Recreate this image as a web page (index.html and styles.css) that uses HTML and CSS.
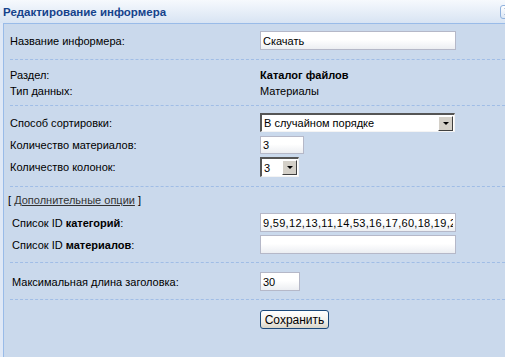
FILE: index.html
```html
<!DOCTYPE html>
<html lang="ru">
<head>
    <meta charset="UTF-8">
    <title>Редактирование информера</title>
    <link rel="stylesheet" href="styles.css">
</head>
<body>

    <div class="window">
        <!-- Window title bar -->
        <div class="window-header">
            <span class="window-title">Редактирование информера</span>
            <span class="tool-close">
                <svg width="9" height="9" viewBox="0 0 9 9"><path d="M2 1 L6 4.5 L2 8" fill="none" stroke="#15428b" stroke-width="1.6"/></svg>
            </span>
        </div>

        <div class="window-body">
            <form class="informer-form">
                <div class="form-section sec-name">
                    <div class="form-row">
                        <label class="row-label" for="infName">Название информера:</label>
                        <input type="text" id="infName" class="text-field field-wide" value="Скачать">
                    </div>
                </div>

                <div class="form-section sec-info">
                    <div class="form-row text-row">
                        <span class="row-label">Раздел:</span>
                        <b>Каталог файлов</b>
                    </div>
                    <div class="form-row text-row">
                        <span class="row-label">Тип данных:</span>
                        <span>Материалы</span>
                    </div>
                </div>

                <div class="form-section sec-sort">
                    <div class="form-row">
                        <span class="row-label">Способ сортировки:</span>
                        <div class="combo combo-wide">
                            <span class="combo-value">В случайном порядке</span>
                            <span class="combo-btn"><span class="combo-arrow"></span></span>
                        </div>
                    </div>
                    <div class="form-row">
                        <label class="row-label" for="matCount">Количество материалов:</label>
                        <input type="text" id="matCount" class="text-field field-count" value="3">
                    </div>
                    <div class="form-row">
                        <span class="row-label">Количество колонок:</span>
                        <div class="combo combo-small">
                            <span class="combo-value">3</span>
                            <span class="combo-btn"><span class="combo-arrow"></span></span>
                        </div>
                    </div>
                </div>

                <div class="form-section sec-extra">
                    <div class="extra-toggle">[ <a href="#">Дополнительные опции</a> ]</div>
                    <div class="form-row">
                        <label class="row-label" for="catIds">Список ID <b>категорий</b>:</label>
                        <input type="text" id="catIds" class="text-field field-wide field-ids" value="9,59,12,13,11,14,53,16,17,60,18,19,20,21">
                    </div>
                    <div class="form-row">
                        <label class="row-label" for="matIds">Список ID <b>материалов</b>:</label>
                        <input type="text" id="matIds" class="text-field field-wide" value="">
                    </div>
                </div>

                <div class="form-section sec-title">
                    <div class="form-row">
                        <label class="row-label" for="titleLen">Максимальная длина заголовка:</label>
                        <input type="text" id="titleLen" class="text-field field-len" value="30">
                    </div>
                </div>

                <div class="form-actions">
                    <button type="button" class="save-btn">Сохранить</button>
                </div>
            </form>
        </div>
    </div>

</body>
</html>
```

FILE: styles.css
```css
/* Basic Reset */
* {
    margin: 0;
    padding: 0;
    box-sizing: border-box;
}

body {
    font-family: "Liberation Sans", Arial, sans-serif;
    font-size: 11px;
    color: #000;
    background-color: #dfe8f6;
    overflow: hidden;
}

.window {
    width: 505px;
    height: 357px;
    overflow: hidden;
}

/* Title bar */
.window-header {
    height: 23px;
    display: flex;
    align-items: center;
    padding-left: 3px;
    background: linear-gradient(#f6f9fd, #d8e4f3);
}

.window-title {
    font-size: 11.5px;
    font-weight: bold;
    color: #15428b;
}

.tool-close {
    margin-left: auto;
    margin-right: -10px;
    width: 15px;
    height: 14px;
    display: flex;
    align-items: center;
    justify-content: center;
    border: 1px solid #8fb1dd;
    border-radius: 3px;
    background: linear-gradient(#ffffff, #dbe6f4);
}

/* Panel body */
.window-body {
    margin-left: 3px;
    height: 334px;
    border-left: 1px solid #99bbe8;
    border-top: 1px solid #99bbe8;
    background-color: #cad9ec;
}

.form-section {
    margin-left: 6px;
    border-bottom: 1px dashed #a0bde6;
}

.form-row {
    display: flex;
    align-items: center;
}

.row-label {
    width: 250px;
    flex-shrink: 0;
}

.text-row {
    line-height: 16px;
}

.sec-name {
    padding: 7px 0 9px;
}

.sec-info {
    padding: 7px 0 6px;
}

.sec-sort {
    padding: 7px 0 9px;
}

.sec-sort .form-row + .form-row {
    margin-top: 4px;
}

.sec-sort .form-row:last-child {
    margin-top: 3px;
}

.sec-extra {
    padding: 5px 0 8px;
}

.sec-extra .row-label {
    padding-left: 2px;
}

.sec-extra .form-row + .form-row {
    margin-top: 3px;
}

.extra-toggle {
    line-height: 16px;
    margin: 0 0 5px -2px;
}

.extra-toggle a {
    color: #333;
}

.sec-title {
    padding: 9px 0 8px;
}

.sec-title .row-label {
    padding-left: 2px;
}

/* Text inputs */
.text-field {
    height: 19px;
    padding: 0 2px;
    font-family: inherit;
    font-size: 11px;
    color: #000;
    border: 1px solid #b5b8c8;
    background: linear-gradient(#ffffff 45%, #eceef2);
    outline: none;
}

.field-wide {
    width: 196px;
}

.field-ids {
    letter-spacing: 0.3px;
}

.field-count {
    width: 44px;
    height: 18px;
}

.field-len {
    width: 40px;
}

/* Combo boxes drawn in the classic style */
.combo {
    display: flex;
    align-items: center;
    height: 19px;
    border-style: solid;
    border-width: 2px 1px 1px 2px;
    border-color: #555 #f4f4f4 #f4f4f4 #555;
    background-color: #fff;
    padding-right: 1px;
}

.combo-wide {
    width: 195px;
}

.combo-small {
    width: 39px;
    height: 20px;
}

.combo-value {
    flex: 1;
    padding-left: 2px;
    white-space: nowrap;
    overflow: hidden;
}

.combo-btn {
    width: 15px;
    height: 15px;
    display: flex;
    align-items: center;
    justify-content: center;
    background-color: #d4d0c8;
    border-style: solid;
    border-width: 1px;
    border-color: #fff #404040 #404040 #fff;
}

.combo-arrow {
    width: 0;
    height: 0;
    border-left: 3px solid transparent;
    border-right: 3px solid transparent;
    border-top: 3px solid #000;
}

/* Save button */
.form-actions {
    padding: 10px 0 0 256px;
}

.save-btn {
    width: 69px;
    height: 19px;
    font-family: inherit;
    font-size: 12px;
    color: #000;
    border: 1px solid #1c4a7a;
    border-radius: 3px;
    background: linear-gradient(#ffffff, #f1f0ea 60%, #d8d4c8);
    cursor: pointer;
}
```
